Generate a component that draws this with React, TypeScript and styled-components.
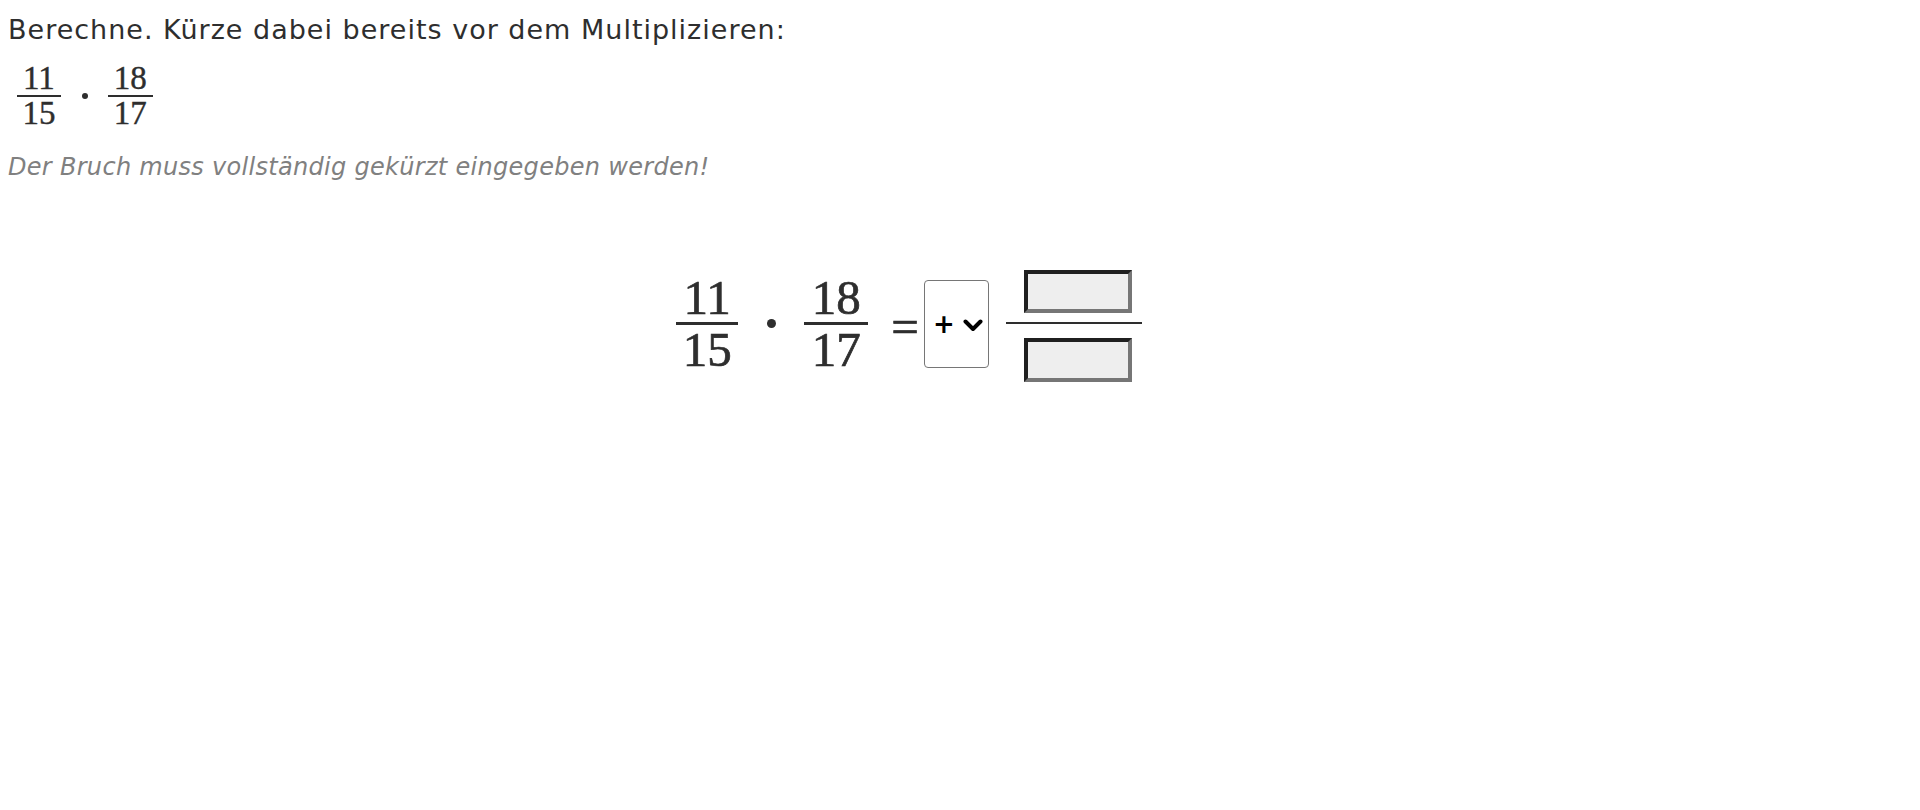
import React, { useState } from "react";
import styled, { createGlobalStyle } from "styled-components";

const GlobalStyle = createGlobalStyle`
  body {
    margin: 0;
    background: #fff;
    color: #2e2e2e;
    font-family: "DejaVu Sans", Verdana, sans-serif;
  }
`;

const Page = styled.div`
  padding: 15px 8px 0;
`;

const Prompt = styled.p`
  margin: 0;
  font-size: 27px;
  letter-spacing: 1px;
  line-height: 30px;
`;

const Hint = styled.p`
  margin: 22px 0 0;
  font-size: 24px;
  letter-spacing: 0.3px;
  line-height: 30px;
  font-style: italic;
  color: #808080;
`;

const MathRow = styled.div<{ $big?: boolean }>`
  display: flex;
  align-items: center;
  font-family: "Liberation Serif", "Times New Roman", serif;
  color: #2e2e2e;
  -webkit-text-stroke: ${(p) => (p.$big ? "0.7px" : "0.4px")} #2e2e2e;
  margin-top: ${(p) => (p.$big ? "83px" : "17px")};
  justify-content: ${(p) => (p.$big ? "center" : "flex-start")};
  padding-right: ${(p) => (p.$big ? "102px" : "0")};
  padding-left: ${(p) => (p.$big ? "0" : "9px")};
`;

const Frac = styled.span<{ $size: number; $pad: number; $bar: number; $gap?: number }>`
  display: inline-flex;
  flex-direction: column;
  align-items: center;
  font-size: ${(p) => p.$size}px;
  line-height: 1;
  margin-left: ${(p) => p.$gap ?? 0}px;

  & > span {
    display: block;
  }
  & > span:first-child {
    align-self: stretch;
    text-align: center;
    padding: 0 ${(p) => p.$pad}px;
    border-bottom: ${(p) => p.$bar}px solid #2e2e2e;
  }
`;

const Dot = styled.span<{ $d: number; $gap: number }>`
  display: inline-block;
  width: ${(p) => p.$d}px;
  height: ${(p) => p.$d}px;
  border-radius: 50%;
  background: #2e2e2e;
  margin: 0 0 0 ${(p) => p.$gap}px;
`;

const Equals = styled.span`
  font-size: 49px;
  line-height: 1;
  margin-left: 23px;
  margin-top: 6px;
`;

const SelectBox = styled.label`
  position: relative;
  display: inline-flex;
  align-items: center;
  box-sizing: border-box;
  width: 65px;
  height: 88px;
  margin-left: 5px;
  border: 1px solid #767676;
  border-radius: 4px;
  background: #fff;
  -webkit-text-stroke: 0;
`;

const OpSelect = styled.select`
  appearance: none;
  border: 0;
  outline: none;
  background: transparent;
  width: 100%;
  height: 100%;
  padding: 0 0 0 8px;
  font-family: "DejaVu Sans", sans-serif;
  font-weight: bold;
  font-size: 26px;
  color: #000;
  cursor: pointer;
`;

const Chevron = styled.svg`
  position: absolute;
  left: 38px;
  top: 38px;
  pointer-events: none;
`;

const Answer = styled.div`
  display: flex;
  flex-direction: column;
  width: 136px;
  margin-left: 17px;
  margin-top: 5px;
`;

const AnswerBar = styled.div`
  height: 2px;
  background: #2e2e2e;
  margin: 9px 0 14px;
`;

const Slot = styled.input<{ $h: number }>`
  box-sizing: border-box;
  width: 108px;
  height: ${(p) => p.$h}px;
  margin-left: 18px;
  border-style: solid;
  border-width: 4px;
  border-color: #1f1f1f #767676 #767676 #1f1f1f;
  background: #eeeeee;
  font-size: 24px;
  font-family: "DejaVu Sans", sans-serif;
  -webkit-text-stroke: 0;
  text-align: center;
  padding: 0;
  outline: none;
`;

function Fraction({ n, d, size, pad, bar, gap }: { n: string; d: string; size: number; pad: number; bar: number; gap?: number }) {
  return (
    <Frac $size={size} $pad={pad} $bar={bar} $gap={gap}>
      <span>{n}</span>
      <span>{d}</span>
    </Frac>
  );
}

export default function App() {
  const [op, setOp] = useState("+");
  const [num, setNum] = useState("");
  const [den, setDen] = useState("");

  return (
    <Page>
      <GlobalStyle />
      <Prompt>Berechne. Kürze dabei bereits vor dem Multiplizieren:</Prompt>

      <MathRow>
        <Fraction n="11" d="15" size={33} pad={6} bar={2} />
        <Dot $d={6} $gap={21} />
        <Fraction n="18" d="17" size={33} pad={6} bar={2} gap={20} />
      </MathRow>

      <Hint>Der Bruch muss vollständig gekürzt eingegeben werden!</Hint>

      <MathRow $big>
        <Fraction n="11" d="15" size={49} pad={7.5} bar={3} />
        <Dot $d={9} $gap={28.5} />
        <Fraction n="18" d="17" size={49} pad={7.5} bar={3} gap={28.5} />
        <Equals>=</Equals>
        <SelectBox>
          <OpSelect value={op} onChange={(e) => setOp(e.target.value)}>
            <option value="+">+</option>
            <option value="-">−</option>
          </OpSelect>
          <Chevron width="20" height="13" viewBox="0 0 20 13">
            <polyline points="2.5,2.5 10,10 17.5,2.5" fill="none" stroke="#000" strokeWidth="4" strokeLinecap="round" strokeLinejoin="round" />
          </Chevron>
        </SelectBox>
        <Answer>
          <Slot $h={43} value={num} onChange={(e) => setNum(e.target.value)} />
          <AnswerBar />
          <Slot $h={44} value={den} onChange={(e) => setDen(e.target.value)} />
        </Answer>
      </MathRow>
    </Page>
  );
}
